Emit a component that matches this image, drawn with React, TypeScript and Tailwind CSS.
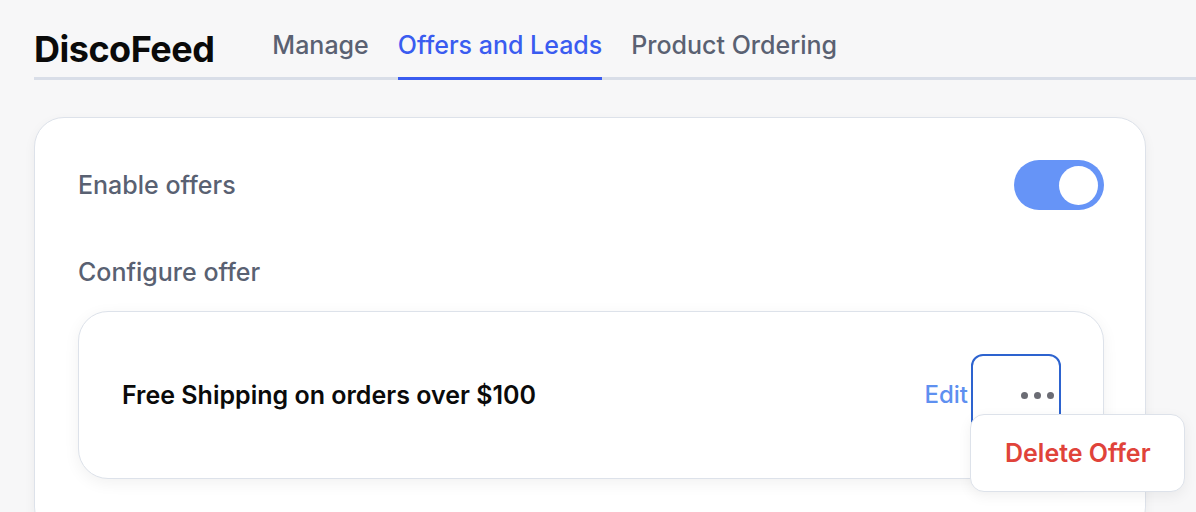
import React from "react";

export default function App() {
  return (
    <div
      className="min-h-[512px] w-[1196px] overflow-hidden bg-[#f7f7f8]"
      style={{ fontFamily: "Inter, 'Noto Sans', sans-serif" }}
    >
      <div className="ml-[34px] pt-[27px]">
        <div className="flex items-end border-b-[3px] border-[#d9dee8]">
          <div className="pb-[6px] text-[36px] font-bold leading-[44px] tracking-[-0.5px] text-[#0a0a0a]">
            DiscoFeed
          </div>
          <div className="ml-[58px] flex gap-[29px]">
            <div className="-mb-[3px] border-b-[3px] border-transparent pb-[16px] text-[25px] font-medium leading-[32px] text-[#5a6172]">
              Manage
            </div>
            <div className="-mb-[3px] border-b-[3px] border-[#3a5cf0] pb-[16px] text-[25px] font-medium leading-[32px] text-[#3a5cf0]">
              Offers and Leads
            </div>
            <div className="-mb-[3px] border-b-[3px] border-transparent pb-[16px] text-[25px] font-medium leading-[32px] text-[#5a6172]">
              Product Ordering
            </div>
          </div>
        </div>
        <div className="mt-[37px] h-[420px] w-[1112px] rounded-[30px] border border-[#dde2ea] bg-white pl-[43px] pr-[41px] pt-[42px] shadow-[0_4px_12px_rgba(0,0,0,0.05)]">
          <div className="flex h-[50px] items-center justify-between">
            <div className="text-[25px] font-medium leading-[32px] text-[#596172]">Enable offers</div>
            <div className="flex h-[50px] w-[90px] items-center justify-end rounded-full bg-[#6694f7] pr-[6px]">
              <div className="h-[39px] w-[39px] rounded-full bg-white" />
            </div>
          </div>
          <div className="mt-[46px] text-[25px] font-medium leading-[32px] text-[#596172]">
            Configure offer
          </div>
          <div className="mt-[23px] flex h-[168px] items-center justify-between rounded-[30px] border border-[#dde2ea] bg-white pl-[43px] pr-[42px] shadow-[0_4px_16px_rgba(0,0,0,0.06)]">
            <div className="text-[25px] font-semibold leading-[32px] text-[#0a0a0a]">
              Free Shipping on orders over $100
            </div>
            <div className="flex items-center">
              <div className="text-[24px] font-medium leading-[32px] text-[#5e90f0]">Edit</div>
              <div className="relative ml-[3px]">
                <div className="flex h-[82px] w-[90px] items-center justify-end rounded-[12px] border-2 border-[#2d63cf] pr-[5px]">
                  <div className="flex gap-[6px]">
                    <div className="h-[7px] w-[7px] rounded-full bg-[#6b6c74]" />
                    <div className="h-[7px] w-[7px] rounded-full bg-[#6b6c74]" />
                    <div className="h-[7px] w-[7px] rounded-full bg-[#6b6c74]" />
                  </div>
                </div>
                <div className="absolute left-[-1px] top-[60px] flex h-[78px] w-[215px] items-center rounded-[14px] border border-[#dde2ea] bg-white pl-[34px] shadow-[0_4px_14px_rgba(0,0,0,0.06)]">
                  <span className="text-[25px] font-semibold leading-[32px] text-[#e0433a]">Delete Offer</span>
                </div>
              </div>
            </div>
          </div>
        </div>
      </div>
    </div>
  );
}
